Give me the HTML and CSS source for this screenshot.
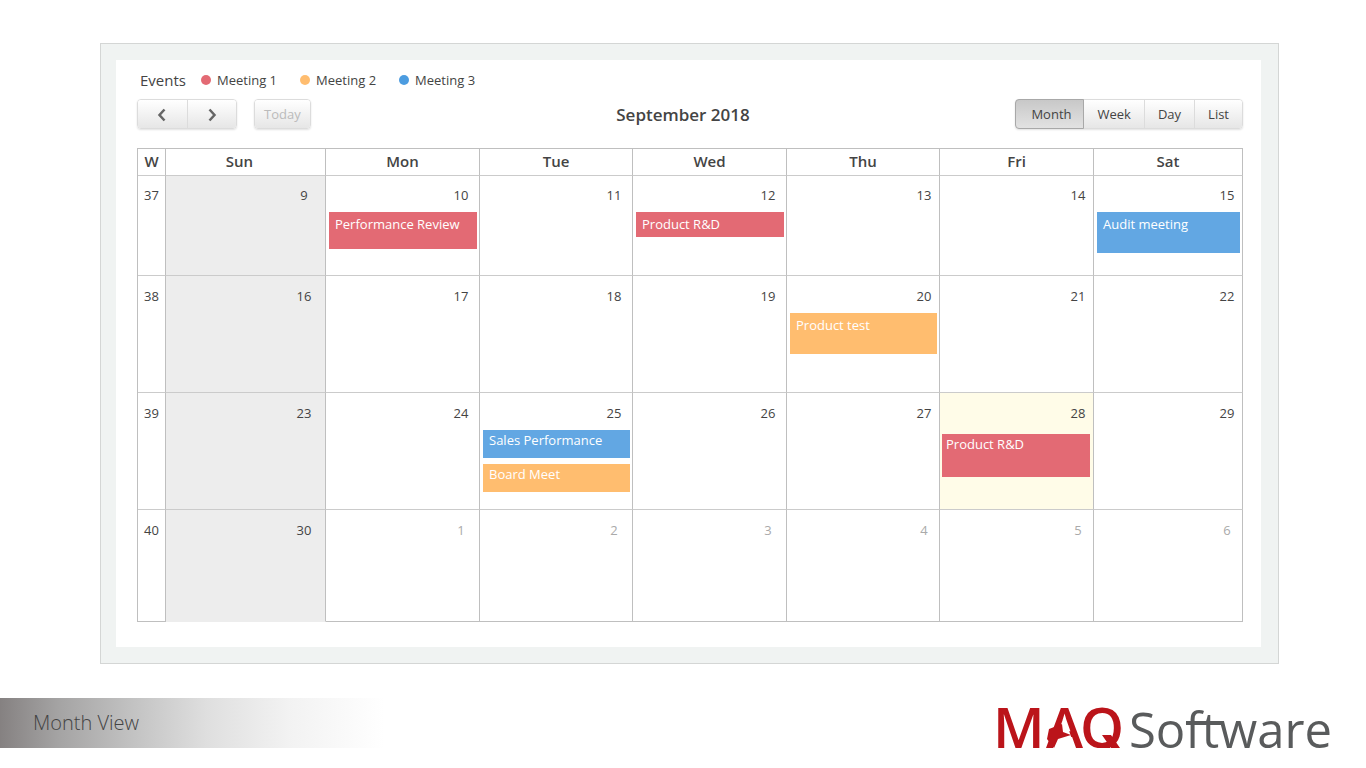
FILE: index.html
```html
<!DOCTYPE html>
<html lang="en">
<head>
<meta charset="utf-8">
<title>Month View</title>
<link rel="stylesheet" href="styles.css">
</head>
<body>
<main class="frame">
  <section class="calendar">
    <div class="legend">
      <span class="legend-title">Events</span>
      <ul class="legend-list">
        <li class="legend-item"><span class="dot red"></span>Meeting 1</li>
        <li class="legend-item"><span class="dot orange"></span>Meeting 2</li>
        <li class="legend-item"><span class="dot blue"></span>Meeting 3</li>
      </ul>
    </div>
    <div class="toolbar">
      <div class="toolbar-left">
        <div class="group nav">
          <button class="btn" type="button" aria-label="Previous month"><svg width="10" height="14" viewBox="0 0 10 14"><path d="M7.500 1.500 2.500 7 7.500 12.500"/></svg></button>
          <button class="btn" type="button" aria-label="Next month"><svg width="10" height="14" viewBox="0 0 10 14"><path d="M2.500 1.500 7.500 7 2.500 12.500"/></svg></button>
        </div>
        <div class="group"><button class="btn today-btn" type="button" disabled>Today</button></div>
      </div>
      <h1 class="title">September 2018</h1>
      <div class="group views">
        <button class="btn month active" type="button" aria-pressed="true">Month</button>
        <button class="btn week" type="button">Week</button>
        <button class="btn" type="button">Day</button>
        <button class="btn" type="button">List</button>
      </div>
    </div>
    <table class="grid">
      <colgroup><col class="c-week"><col class="c-sun"><col class="c-wide"><col class="c-day"><col class="c-wide"><col class="c-day"><col class="c-wide"><col class="c-sat"></colgroup>
      <thead>
        <tr><th>W</th><th class="sun-head">Sun</th><th>Mon</th><th>Tue</th><th>Wed</th><th>Thu</th><th>Fri</th><th>Sat</th></tr>
      </thead>
      <tbody>
        <tr class="short">
          <td class="wk">37</td>
          <td class="sun"><span class="num">9</span></td>
          <td><span class="num">10</span><div class="event red h37">Performance Review</div></td>
          <td><span class="num">11</span></td>
          <td><span class="num">12</span><div class="event red h25">Product R&amp;D</div></td>
          <td class="late"><span class="num">13</span></td>
          <td class="late"><span class="num">14</span></td>
          <td class="late"><span class="num">15</span><div class="event blue h41">Audit meeting</div></td>
        </tr>
        <tr class="tall">
          <td class="wk">38</td>
          <td class="sun"><span class="num">16</span></td>
          <td><span class="num">17</span></td>
          <td><span class="num">18</span></td>
          <td><span class="num">19</span></td>
          <td class="late"><span class="num">20</span><div class="event orange h41">Product test</div></td>
          <td class="late"><span class="num">21</span></td>
          <td class="late"><span class="num">22</span></td>
        </tr>
        <tr class="tall">
          <td class="wk">39</td>
          <td class="sun"><span class="num">23</span></td>
          <td><span class="num">24</span></td>
          <td><span class="num">25</span><div class="event blue tight h28">Sales Performance</div><div class="event orange tight h28">Board Meet</div></td>
          <td><span class="num">26</span></td>
          <td class="late"><span class="num">27</span></td>
          <td class="late current"><span class="num">28</span><div class="event red tight h43">Product R&amp;D</div></td>
          <td class="late"><span class="num">29</span></td>
        </tr>
        <tr class="last">
          <td class="wk">40</td>
          <td class="sun"><span class="num">30</span></td>
          <td class="next"><span class="num">1</span></td>
          <td class="next"><span class="num">2</span></td>
          <td class="next"><span class="num">3</span></td>
          <td class="late next"><span class="num">4</span></td>
          <td class="late next"><span class="num">5</span></td>
          <td class="late next"><span class="num">6</span></td>
        </tr>
      </tbody>
    </table>
  </section>
</main>
<footer class="footer">
  <h2 class="caption">Month View</h2>
  <svg class="logo" width="336" height="60" viewBox="0 0 336 60" role="img" aria-label="MAQ Software">
    <g class="logo-maq"><text x="-3" y="60">M</text><text x="50" y="60">A</text><text x="84" y="60">Q</text></g>
    <path class="logo-gap" d="M69 31 79 60H59zM104 60h24v12h-24z"/>
    <path class="logo-spark" d="M53 41 66 36 67 44 75 47 62 51 58 60 51 51zM106 47h9l9 13h-9z"/>
    <text class="logo-soft" x="133" y="60">Software</text>
    <path class="logo-bar" d="M190 33h37v4h-37z"/>
  </svg>
</footer>
</body>
</html>
```
FILE: styles.css
```css
* { box-sizing: border-box; }

body {
  margin: 0;
  padding-top: 43px;
  background: #fff;
  color: #444;
  font: 14px/20px "Open Sans", "Noto Sans", sans-serif;
}

.frame {
  margin: 0 87px 0 100px;
  padding: 16px 17px 16px 15px;
  border: 1px solid #d4d6d5;
  background: #f0f3f2;
}

.calendar { padding: 10px 18px 25px 21px; background: #fff; }

.legend { display: flex; align-items: center; gap: 15px; padding-left: 3px; }
.legend-title { font-size: 15px; }
.legend-list { display: flex; gap: 23px; margin: 0; padding: 0; list-style: none; font-size: 13px; }
.legend-item { display: flex; align-items: center; gap: 6px; }
.dot { width: 10px; height: 10px; border-radius: 50%; }

.red { background: #e36a74; }
.orange { background: #ffbd6f; }
.blue { background: #62a7e3; }
.dot.blue { background: #4c9ce0; }

.toolbar {
  display: grid;
  grid-template-columns: 1fr auto 1fr;
  align-items: center;
  margin: 9px 0 19px;
}
.toolbar-left { display: flex; gap: 17px; }
.title { margin: 2px 14px 0 0; font-size: 17px; line-height: 24px; font-weight: 600; }

.group {
  display: flex;
  height: 30px;
  border: 1px solid #dcdcdc;
  border-radius: 4px;
  box-shadow: 0 1px 2px rgba(0, 0, 0, .12);
}
.btn {
  padding: 0 13px;
  border: 0;
  border-right: 1px solid #dcdcdc;
  background: linear-gradient(#fff, #e6e6e6);
  color: #444;
  font: 13px/20px "Open Sans", "Noto Sans", sans-serif;
}
.btn:first-child { border-radius: 3px 0 0 3px; }
.btn:last-child { border-right: 0; border-radius: 0 3px 3px 0; }
.nav { width: 100px; }
.nav .btn { flex: 1; padding: 0; }
.btn svg { display: block; margin: 2px auto 0; fill: none; stroke: #666; stroke-width: 2.500; }
.today-btn { padding: 0 9px; color: #bbb; }
.btn.today-btn { border-radius: 3px; }
.views { justify-self: end; }
.btn.month { padding: 0 12px 0 15px; }
.btn.active {
  margin: -1px 0 -1px -1px;
  border: 1px solid #a8a8a8;
  border-radius: 4px 0 0 4px;
  background: linear-gradient(#c8c8c8, #e2e2e2);
}

.grid {
  width: 100%;
  table-layout: fixed;
  border-spacing: 0;
  border-top: 1px solid #bfbfbf;
  border-left: 1px solid #bfbfbf;
}
.c-week { width: 28px; }
.c-sun { width: 160px; }
.c-wide { width: 154px; }
.c-day { width: 153px; }
.c-sat { width: 149px; }
th, td {
  padding: 0;
  border-right: 1px solid #bfbfbf;
  border-bottom: 1px solid #cbcbcb;
}
th { height: 27px; padding-bottom: 2px; font-size: 15px; line-height: 22px; font-weight: 600; }
.sun-head { padding-right: 12px; }
td { padding-top: 11px; vertical-align: top; font-size: 13px; line-height: 19px; }
.short { height: 100px; }
.short td { padding-top: 10px; }
.tall { height: 117px; }
.last { height: 112px; }
.last td { border-bottom-color: #bfbfbf; }
.wk { text-align: center; }
.num { display: block; width: 16px; margin: 0 10px 0 auto; text-align: center; }
.late .num { margin-right: 7px; }
.sun { background: #ededed; }
.sun .num { margin-right: 13px; }
.last .sun { border-bottom-color: #ededed; }
.next { color: #aaa; }
.current { background: #fffce8; }

.event {
  margin: 7px 2px 0 3px;
  padding: 3px 6px 0;
  color: #fff;
  white-space: nowrap;
}
.event + .event { margin-top: 6px; }
.tight { padding-top: 1px; }
.current .event { margin: 11px 3px 0 2px; padding-left: 4px; }
.h25 { height: 25px; }
.h28 { height: 28px; }
.h37 { height: 37px; }
.h41 { height: 41px; }
.h43 { height: 43px; }

.footer {
  display: flex;
  align-items: flex-end;
  justify-content: space-between;
  margin-top: 24px;
  padding-right: 34px;
}
.caption {
  width: 384px;
  margin: 0;
  padding-left: 33px;
  background: linear-gradient(90deg, #858181, #a4a3a3 15%, #c3c3c3 35%, #dfdfdf 54%, #f2f2f2 75%, #fff);
  color: #444;
  font: 300 20px/50px "Open Sans", "Noto Sans", sans-serif;
}
.logo { display: block; overflow: visible; }
.logo text { font-family: "Open Sans", "Noto Sans", sans-serif; }
.logo-maq { fill: #bb141a; font-size: 56px; font-weight: 600; }
.logo-soft { fill: #595b5c; font-size: 49px; }
.logo-gap { fill: #fff; }
.logo-spark { fill: #bb141a; }
.logo-bar { fill: #595b5c; }
```
